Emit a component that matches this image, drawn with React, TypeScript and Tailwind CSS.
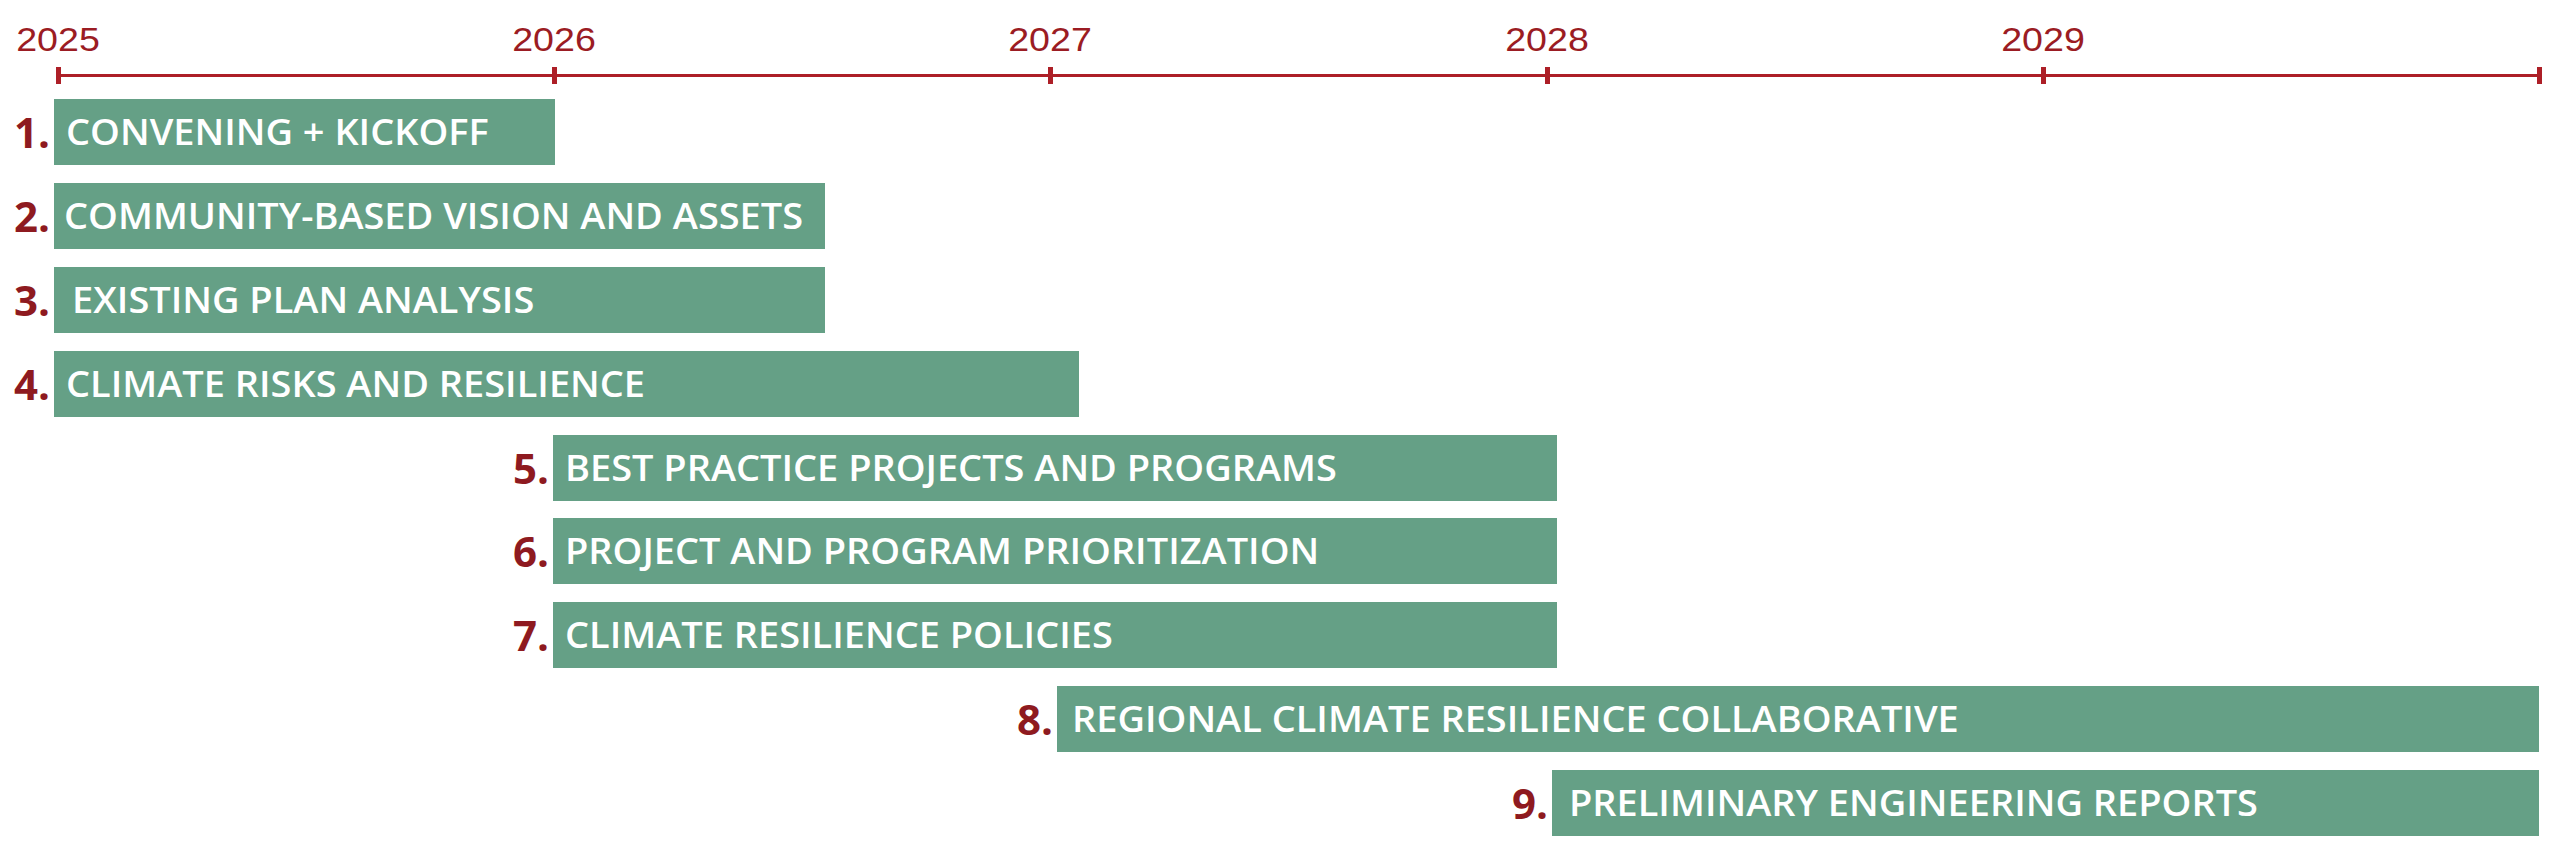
import React from "react";

type Row = { n: string; label: string; left: string; width: string; pad: string };

const rows: Row[] = [
  { n: "1.", label: "CONVENING + KICKOFF", left: "w-[54px]", width: "w-[501px]", pad: "pl-[12px]" },
  { n: "2.", label: "COMMUNITY-BASED VISION AND ASSETS", left: "w-[54px]", width: "w-[771px]", pad: "pl-[10px]" },
  { n: "3.", label: "EXISTING PLAN ANALYSIS", left: "w-[54px]", width: "w-[771px]", pad: "pl-[18px]" },
  { n: "4.", label: "CLIMATE RISKS AND RESILIENCE", left: "w-[54px]", width: "w-[1025px]", pad: "pl-[12px]" },
  { n: "5.", label: "BEST PRACTICE PROJECTS AND PROGRAMS", left: "w-[553px]", width: "w-[1004px]", pad: "pl-[12px]" },
  { n: "6.", label: "PROJECT AND PROGRAM PRIORITIZATION", left: "w-[553px]", width: "w-[1004px]", pad: "pl-[12px]" },
  { n: "7.", label: "CLIMATE RESILIENCE POLICIES", left: "w-[553px]", width: "w-[1004px]", pad: "pl-[12px]" },
  { n: "8.", label: "REGIONAL CLIMATE RESILIENCE COLLABORATIVE", left: "w-[1057px]", width: "w-[1482px]", pad: "pl-[15px]" },
  { n: "9.", label: "PRELIMINARY ENGINEERING REPORTS", left: "w-[1552px]", width: "w-[987px]", pad: "pl-[17px]" },
];

const years = ["2025", "2026", "2027", "2028", "2029"];

function Tick() {
  return <div className="w-[5px] h-[17px] bg-[#ad1f27] shrink-0" />;
}

function Segment() {
  return <div className="w-[491.2px] h-[3px] bg-[#ad1f27] shrink-0" />;
}

export default function App() {
  return (
    <div className="w-[2560px] h-[853px] bg-white overflow-hidden flex flex-col" style={{ fontFamily: '"Open Sans", "Noto Sans", sans-serif' }}>
      {/* year labels */}
      <div className="flex pt-[23px] gap-[380.2px] h-[56px]">
        {years.map((y) => (
          <div
            key={y}
            className="w-[116px] shrink-0 flex justify-center text-[33px] leading-none text-[#9b1c23] scale-x-[1.14]"
            style={{ fontFamily: '"Liberation Sans", Arial, sans-serif' }}
          >
            {y}
          </div>
        ))}
      </div>
      {/* axis */}
      <div className="flex items-center ml-[56px] mt-[11px]">
        <Tick />
        <Segment />
        <Tick />
        <Segment />
        <Tick />
        <Segment />
        <Tick />
        <Segment />
        <Tick />
        <Segment />
        <Tick />
      </div>
      {/* bars */}
      <div className="flex flex-col gap-[17.9px] mt-[15px]">
        {rows.map((r) => (
          <div key={r.n} className="flex h-[66px]">
            <div className={`${r.left} shrink-0 flex items-center justify-end pr-[4px]`}>
              <span className="text-[42px] font-bold leading-none text-[#8e1a20] whitespace-nowrap">{r.n}</span>
            </div>
            <div className={`${r.width} ${r.pad} shrink-0 h-[66px] bg-[#65a086] flex items-center`}>
              <span className="text-[36px] font-semibold leading-none text-white whitespace-nowrap origin-left scale-x-[1.054]">
                {r.label}
              </span>
            </div>
          </div>
        ))}
      </div>
    </div>
  );
}
